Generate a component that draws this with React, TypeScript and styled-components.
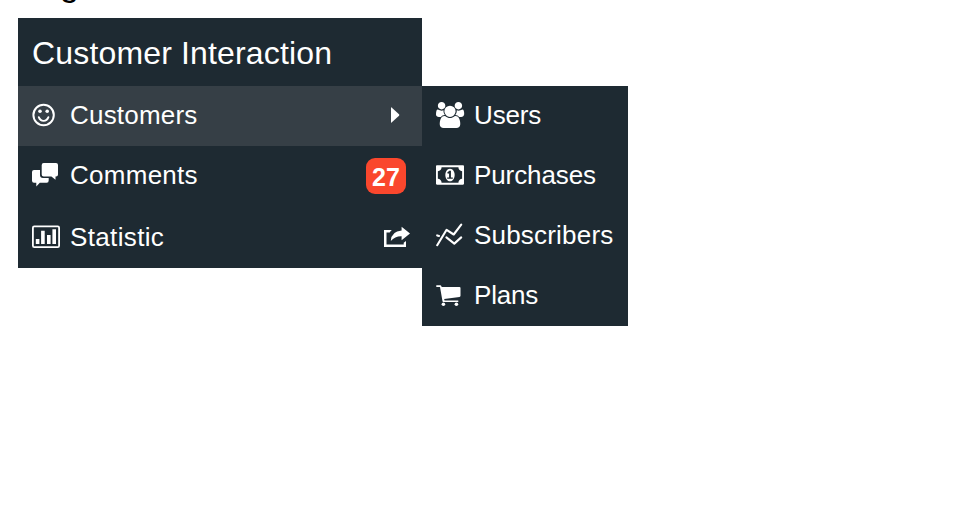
import React from "react";
import styled, { createGlobalStyle } from "styled-components";

const GlobalStyle = createGlobalStyle`
  * { box-sizing: border-box; }
  body {
    margin: 0;
    background: #fff;
    font-family: "Liberation Sans", Arial, sans-serif;
    overflow: hidden;
  }
`;

const Page = styled.main`
  height: 526px;
  overflow: hidden;
`;

const Heading = styled.div`
  display: flex;
  align-items: flex-end;
  height: 18px;
  padding-left: 60px;
  font-size: 34px;
  line-height: 38px;
  padding-bottom: 15px;
  color: #000;
`;

const Menus = styled.div`
  display: flex;
  align-items: flex-start;
  padding-left: 18px;
`;

const Sidebar = styled.nav`
  width: 404px;
  background: #1e2a32;
  color: #fff;
`;

const Submenu = styled.nav`
  width: 206px;
  margin-top: 68px;
  background: #1e2a32;
  color: #fff;
`;

const Title = styled.h2<{ $spacing: number }>`
  height: 68px;
  margin: 0;
  padding: 0 14px;
  font-size: 32px;
  font-weight: 400;
  line-height: 70px;
  letter-spacing: ${(p) => p.$spacing}px;
  white-space: nowrap;
`;

const Item = styled.a<{ $active?: boolean; $tall?: boolean }>`
  display: flex;
  align-items: flex-start;
  height: ${(p) => (p.$tall ? 62 : 60)}px;
  padding-left: 14px;
  background: ${(p) => (p.$active ? "#363f46" : "transparent")};
`;

const Icon = styled.svg`
  flex: none;
  width: 30px;
  height: 60px;
  margin-right: 8px;
  fill: #fff;
  stroke: none;
`;

const Label = styled.span<{ $spacing: number }>`
  flex: 1;
  font-size: 26px;
  line-height: 58px;
  letter-spacing: ${(p) => p.$spacing}px;
  white-space: nowrap;
`;

const Badge = styled.span`
  width: 40px;
  height: 36px;
  margin: 12px 16px 0 0;
  border-radius: 9px;
  background: #fa472d;
  font-size: 25px;
  font-weight: 700;
  line-height: 38px;
  text-align: center;
`;

const Trailing = styled.svg`
  flex: none;
  width: 40px;
  height: 60px;
  fill: #fff;
`;

const Smile = () => (
  <Icon viewBox="0 0 30 60">
    <circle cx="11.6" cy="29" r="10.2" fill="none" stroke="#fff" strokeWidth="2" />
    <circle cx="8" cy="25.3" r="1.8" />
    <circle cx="15.2" cy="25.3" r="1.8" />
    <path d="M6.8 31.2Q8.2 34.9 11.6 34.9T16.4 31.2" fill="none" stroke="#fff" strokeWidth="1.9" strokeLinecap="round" />
  </Icon>
);

const Comments = () => (
  <Icon viewBox="0 0 30 60">
    <path d="M11.7 17H24Q26 17 26 19V28.4Q26 30.4 24 30.4H23.5V33.7L19.4 30.4H11.7Q9.7 30.4 9.7 28.4V19Q9.7 17 11.7 17Z" />
    <path d="M2 24H8V29Q8 32 11 32H16.7V34.5Q16.7 36.7 14.7 36.7H7.8L4.3 40.4V36.7H2Q0 36.7 0 34.7V26Q0 24 2 24Z" />
  </Icon>
);

const BarChart = () => (
  <Icon viewBox="0 0 30 60">
    <rect x="0.9" y="18.4" width="26.2" height="20.7" rx="1.4" fill="none" stroke="#fff" strokeWidth="1.8" />
    <path d="M3.8 31H7.4V36H3.8ZM9.1 22.7H12.7V36H9.1ZM15 27H18.6V36H15ZM20.4 21.3H24V36H20.4Z" />
  </Icon>
);

const Users = () => (
  <Icon viewBox="0 0 30 60">
    <path
      transform="translate(0 19.7) scale(.01458)"
      d="M593 640q-162 5-265 128h-134q-82 0-138-40.5t-56-118.5q0-353 124-353 6 0 43.5 21t97.5 42.5 119 21.5q67 0 133-23-5 37-5 66 0 159 97 256zm1071 637q0 120-73 189.5t-194 69.5h-874q-121 0-194-69.5t-73-189.5q0-53 3.5-103.5t14-109 26.5-108.5 43-97.5 62-81 85.5-53.5 111.5-20q10 0 43 21.5t73 48 107 48 135 21.5 135-21.5 107-48 73-48 43-21.5q61 0 111.5 20t85.5 53.5 62 81 43 97.5 26.5 108.5 14 109 3.5 103.5zm-1024-1277q0 106-75 181t-181 75-181-75-75-181 75-181 181-75 181 75 75 181zm704 384q0 159-112.5 271.5t-271.5 112.5-271.5-112.5-112.5-271.5 112.5-271.5 271.5-112.5 271.5 112.5 112.5 271.5zm576 225q0 78-56 118.5t-138 40.5h-134q-103-123-265-128 97-97 97-256 0-29-5-66 66 23 133 23 59 0 119-21.5t97.5-42.5 43.5-21q124 0 124 353zm-128-609q0 106-75 181t-181 75-181-75-75-181 75-181 181-75 181 75 75 181z"
    />
  </Icon>
);

const Money = () => (
  <Icon viewBox="0 0 30 60">
    <path
      transform="translate(0 17.4) scale(.01458 .0151)"
      d="M768 1024h384v-96h-128v-448h-114l-148 137 77 80q42-37 55-57h2v288h-128v96zm512-256q0 70-21 142t-59.5 134-101.5 101-138 39-138-39-101.5-101-59.5-134-21-142 21-142 59.5-134 101.5-101 138-39 138 39 101.5 101 59.5 134 21 142zm512 256v-512q-106 0-181-75t-75-181h-1152q0 106-75 181t-181 75v512q106 0 181 75t75 181h1152q0-106 75-181t181-75zm128-832v1152q0 26-19 45t-45 19h-1792q-26 0-45-19t-19-45v-1152q0-26 19-45t45-19h1792q26 0 45 19t19 45z"
    />
  </Icon>
);

const LineGraph = () => (
  <Icon viewBox="0 0 30 60">
    <g fill="none" stroke="#fff" strokeWidth="2.1" strokeLinecap="round" strokeLinejoin="round">
      <path d="M1.2 39.2L10.6 23.8L17.7 28.5L25.2 18.7" />
      <path d="M10.4 31.4L18.3 37.6L25.2 31.4" />
      <path d="M1.2 29.4L3 29.9" />
    </g>
  </Icon>
);

const Cart = () => (
  <Icon viewBox="0 0 30 60">
    <path d="M0.3 19.3H4.3Q5.1 19.3 5.4 20.2L5.7 21.1H23.5Q24.5 21.1 24.5 22.1V29.8Q24.5 30.7 23.5 30.9L8.2 33L8.5 34.4H22.3V36H7.2Q6.6 36 6.5 35.3L4 21H0.3Z" />
    <circle cx="7.4" cy="38.2" r="1.8" />
    <circle cx="20.4" cy="38.2" r="1.8" />
  </Icon>
);

const Caret = () => (
  <Trailing viewBox="382 86 40 60">
    <path d="M391 107.6Q391 107 391.6 107.5L399 114.2Q399.8 115 399 115.8L391.6 122.5Q391 123 391 122.4Z" />
  </Trailing>
);

const Export = () => (
  <Trailing viewBox="382 208 40 60">
    <path d="M391.8 230H384V247H406V241L403.7 242.8V244.6H386.5V232.4H389.7Q390.4 231.2 391.8 230Z" />
    <path d="M401.6 226.8L410 233.4L401.6 240.2V236.3Q395 236.1 390.8 241Q391.5 231.2 401.6 230.6Z" />
  </Trailing>
);

export default function App() {
  return (
    <>
      <GlobalStyle />
      <Page>
        <Heading>g</Heading>
        <Menus>
          <Sidebar>
            <Title $spacing={0.16}>Customer Interaction</Title>
            <Item $active>
              <Smile />
              <Label $spacing={0.2}>Customers</Label>
              <Caret />
            </Item>
            <Item $tall>
              <Comments />
              <Label $spacing={0.27}>Comments</Label>
              <Badge>27</Badge>
            </Item>
            <Item>
              <BarChart />
              <Label $spacing={0.35}>Statistic</Label>
              <Export />
            </Item>
          </Sidebar>
          <Submenu>
            <Item>
              <Users />
              <Label $spacing={-0.15}>Users</Label>
            </Item>
            <Item>
              <Money />
              <Label $spacing={-0.1}>Purchases</Label>
            </Item>
            <Item>
              <LineGraph />
              <Label $spacing={0.2}>Subscribers</Label>
            </Item>
            <Item>
              <Cart />
              <Label $spacing={-0.2}>Plans</Label>
            </Item>
          </Submenu>
        </Menus>
      </Page>
    </>
  );
}
